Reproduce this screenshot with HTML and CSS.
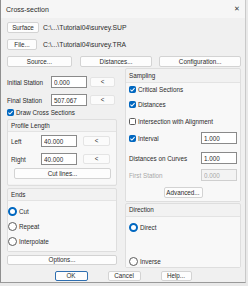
FILE: index.html
```html
<!DOCTYPE html>
<html lang="en">
<head>
  <meta charset="UTF-8" />
  <title>Cross-section</title>
  <link rel="stylesheet" href="styles.css">
</head>
<body>
  <div class="window">
    <div class="titlebar">
      <span class="title">Cross-section</span>
      <span class="close">&#x2715;</span>
    </div>
    <div class="content">
      <div class="file-row">
        <button class="btn btn-surface">Surface</button>
        <span class="path">C:\...\Tutorial04\survey.SUP</span>
      </div>
      <div class="file-row row-file">
        <button class="btn btn-file">File...</button>
        <span class="path">C:\...\Tutorial04\survey.TRA</span>
      </div>
      <div class="btn-row">
        <button class="btn btn-source">Source...</button>
        <button class="btn btn-distances">Distances...</button>
        <button class="btn btn-config">Configuration...</button>
      </div>

      <div class="columns">
        <div class="col-left">
          <div class="station-row">
            <span class="label">Initial Station</span>
            <input class="field station-field" type="text" value="0.000" />
            <button class="btn btn-pick">&lt;</button>
          </div>
          <div class="station-row row-final">
            <span class="label">Final Station</span>
            <input class="field station-field" type="text" value="507.067" />
            <button class="btn btn-pick">&lt;</button>
          </div>
          <div class="check-row row-draw">
            <span class="check on"><svg viewBox="0 0 8 8"><polyline points="1.6,4.2 3.3,5.8 6.4,2.4" /></svg></span>
            <span>Draw Cross Sections</span>
          </div>

          <div class="group group-profile">
            <div class="group-head">Profile Length</div>
            <div class="group-body">
              <div class="length-row">
                <span class="label">Left</span>
                <input class="field length-field" type="text" value="40.000" />
                <button class="btn btn-pick btn-pick-wide">&lt;</button>
              </div>
              <div class="length-row row-right">
                <span class="label">Right</span>
                <input class="field length-field" type="text" value="40.000" />
                <button class="btn btn-pick btn-pick-wide">&lt;</button>
              </div>
              <button class="btn btn-cut">Cut lines...</button>
            </div>
          </div>

          <div class="group group-ends">
            <div class="group-head">Ends</div>
            <div class="group-body radio-list">
              <div class="radio-row"><span class="radio on"></span><span>Cut</span></div>
              <div class="radio-row"><span class="radio"></span><span>Repeat</span></div>
              <div class="radio-row"><span class="radio"></span><span>Interpolate</span></div>
            </div>
          </div>

          <button class="btn btn-options">Options...</button>
        </div>

        <div class="col-right">
          <div class="group group-sampling">
            <div class="group-head">Sampling</div>
            <div class="group-body">
              <div class="check-row row-critical">
                <span class="check on"><svg viewBox="0 0 8 8"><polyline points="1.6,4.2 3.3,5.8 6.4,2.4" /></svg></span>
                <span>Critical Sections</span>
              </div>
              <div class="check-row row-dist">
                <span class="check on"><svg viewBox="0 0 8 8"><polyline points="1.6,4.2 3.3,5.8 6.4,2.4" /></svg></span>
                <span>Distances</span>
              </div>
              <div class="check-row row-inter">
                <span class="check"></span>
                <span>Intersection with Alignment</span>
              </div>
              <div class="value-row row-interval">
                <div class="check-row">
                  <span class="check on"><svg viewBox="0 0 8 8"><polyline points="1.6,4.2 3.3,5.8 6.4,2.4" /></svg></span>
                  <span>Interval</span>
                </div>
                <input class="field value-field" type="text" value="1.000" />
              </div>
              <div class="value-row row-curves">
                <span class="label">Distances on Curves</span>
                <input class="field value-field" type="text" value="1.000" />
              </div>
              <div class="value-row row-first disabled">
                <span class="label">First Station</span>
                <input class="field value-field" type="text" value="0.000" disabled />
              </div>
              <button class="btn btn-advanced">Advanced...</button>
            </div>
          </div>

          <div class="group group-direction">
            <div class="group-head">Direction</div>
            <div class="group-body radio-list">
              <div class="radio-row"><span class="radio on"></span><span>Direct</span></div>
              <div class="radio-row row-inverse"><span class="radio"></span><span>Inverse</span></div>
            </div>
          </div>
        </div>
      </div>

      <div class="footer">
        <button class="btn btn-foot btn-default">OK</button>
        <button class="btn btn-foot">Cancel</button>
        <button class="btn btn-foot btn-help">Help...</button>
      </div>
    </div>
  </div>
</body>
</html>
```

FILE: styles.css
```css
body {
  margin: 0;
  background: #e9e9e9;
  font-family: 'Liberation Sans', Arial, sans-serif;
  font-size: 6.3px;
  color: #2b2b2b;
}
.window {
  width: 246px;
  height: 283px;
  background: #f0f0f0;
  border-left: 1px solid #8f8f8f;
  border-bottom: 1px solid #9a9a9a;
  border-right: 1px solid #c9c9c9;
  box-sizing: border-box;
  overflow: hidden;
}
.titlebar {
  height: 18px;
  background: #f6f6f6;
  display: flex;
  align-items: center;
  justify-content: space-between;
  padding: 0 5px 0 5px;
}
.titlebar .title {
  font-size: 7px;
  color: #2b2b2b;
}
.titlebar .close {
  font-size: 6.5px;
  color: #3a3a3a;
}
.content {
  padding: 0 4px 0 6px;
}

/* buttons */
.btn {
  font-family: 'Liberation Sans', Arial, sans-serif;
  font-size: 6.3px;
  color: #2b2b2b;
  background: #fdfdfd;
  border: 1px solid #d3d3d3;
  border-radius: 2px;
  padding: 0;
  height: 11px;
  line-height: 9px;
  box-sizing: border-box;
}

.file-row {
  display: flex;
  align-items: center;
  margin-top: 4px;
  height: 11px;
}
.row-file {
  margin-top: 6px;
}
.btn-surface { width: 32px; }
.btn-file { width: 30px; margin-right: 2px; }
.path {
  margin-left: 4px;
  font-size: 6.8px;
}

.btn-row {
  display: flex;
  margin-top: 6px;
}
.btn-source { width: 65px; margin-right: 8px; }
.btn-distances { width: 73px; margin-right: 7px; }
.btn-config { width: 82px; }

.columns {
  display: flex;
  gap: 8px;
  margin-top: 1px;
}
.col-left {
  width: 110px;
  display: flex;
  flex-direction: column;
}
.col-right {
  width: 116px;
  display: flex;
  flex-direction: column;
}

/* inputs */
.field {
  font-family: 'Liberation Sans', Arial, sans-serif;
  font-size: 6.3px;
  color: #2b2b2b;
  background: #fff;
  border: 1px solid #8a8a8a;
  border-radius: 0;
  height: 12px;
  padding: 0 2px;
  box-sizing: border-box;
  outline: none;
}
.field:disabled {
  background: #f3f3f3;
  border-color: #cfcfcf;
  color: #a8a8a8;
}

.station-row {
  display: flex;
  align-items: center;
  height: 12px;
  margin-top: 8px;
}
.row-final { margin-top: 6px; }
.station-row .label { width: 44px; }
.station-field { width: 36px; }
.btn-pick {
  width: 25px;
  height: 10px;
  margin-left: 3px;
  background: #fbfbfb;
  border-color: #e4e4e4;
  line-height: 8px;
}
.btn-pick-wide {
  width: 27px;
  margin-left: 6px;
}

/* check boxes */
.check-row {
  display: flex;
  align-items: center;
  height: 9px;
}
.check {
  width: 7px;
  height: 7px;
  border: 1px solid #5c5c5c;
  border-radius: 1.5px;
  background: #fff;
  box-sizing: border-box;
  margin-right: 2px;
  display: flex;
}
.check.on {
  background: #0067c0;
  border-color: #0067c0;
}
.check svg {
  width: 7px;
  height: 7px;
  margin: -1px;
}
.check svg polyline {
  fill: none;
  stroke: #fff;
  stroke-width: 1.2;
}
.row-draw {
  margin-top: 2px;
}

/* groups */
.group {
  border: 1px solid #dedede;
  border-radius: 2px;
  background: #f2f2f2;
  box-sizing: border-box;
}
.group-head {
  height: 11px;
  line-height: 11px;
  padding-left: 3px;
}
.group-body {
  background: #f8f8f8;
  border-top: 1px solid #e3e3e3;
}

.group-profile {
  margin-top: 2px;
  height: 67px;
}
.group-profile .group-body {
  height: 53px;
  padding-left: 3px;
  padding-top: 3px;
  box-sizing: border-box;
}
.length-row {
  display: flex;
  align-items: center;
  height: 12px;
}
.row-right { margin-top: 6px; }
.length-row .label { width: 30px; }
.length-field { width: 36px; }
.btn-cut {
  display: block;
  width: 97px;
  margin-top: 3px;
  margin-left: 3px;
}

.group-ends {
  margin-top: 2px;
  height: 64px;
}
.radio-list {
  padding-top: 3px;
}
.group-ends .group-body {
  height: 51px;
  box-sizing: border-box;
}
.radio-row {
  display: flex;
  align-items: center;
  height: 15px;
}
.radio {
  width: 9px;
  height: 9px;
  border: 1px solid #5c5c5c;
  border-radius: 50%;
  background: #fff;
  box-sizing: border-box;
  margin-right: 2px;
}
.radio.on {
  border: 2.5px solid #0067c0;
}

.btn-options {
  width: 110px;
  margin-top: 3px;
  height: 10px;
  line-height: 8px;
}

.group-sampling {
  height: 134px;
}
.group-sampling .group-head {
  height: 13px;
  line-height: 13px;
}
.group-sampling .group-body {
  height: 119px;
  box-sizing: border-box;
  padding: 2px 3px 0 3px;
}
.row-dist { margin-top: 6px; }
.row-inter { margin-top: 8px; }
.value-row {
  display: flex;
  align-items: center;
  justify-content: space-between;
  height: 12px;
}
.row-interval { margin-top: 6px; }
.row-curves { margin-top: 8px; }
.row-first { margin-top: 5px; }
.value-row.disabled .label { color: #a8a8a8; }
.value-field { width: 36px; }
.btn-advanced {
  display: block;
  width: 39px;
  margin: 6px auto 0 auto;
}

.group-direction {
  margin-top: 1px;
  height: 65px;
}
.group-direction .group-head {
  height: 12px;
  line-height: 12px;
}
.group-direction .group-body {
  height: 51px;
  box-sizing: border-box;
  padding-left: 3px;
}
.row-inverse { margin-top: 19px; }

.footer {
  display: flex;
  justify-content: center;
  gap: 20px;
  margin-top: 3px;
  padding-right: 2px;
}
.btn-foot {
  width: 33px;
  height: 10px;
  line-height: 8px;
}
.btn-help { width: 31px; }
.btn-default {
  border-color: #2f6fb0;
}
```
